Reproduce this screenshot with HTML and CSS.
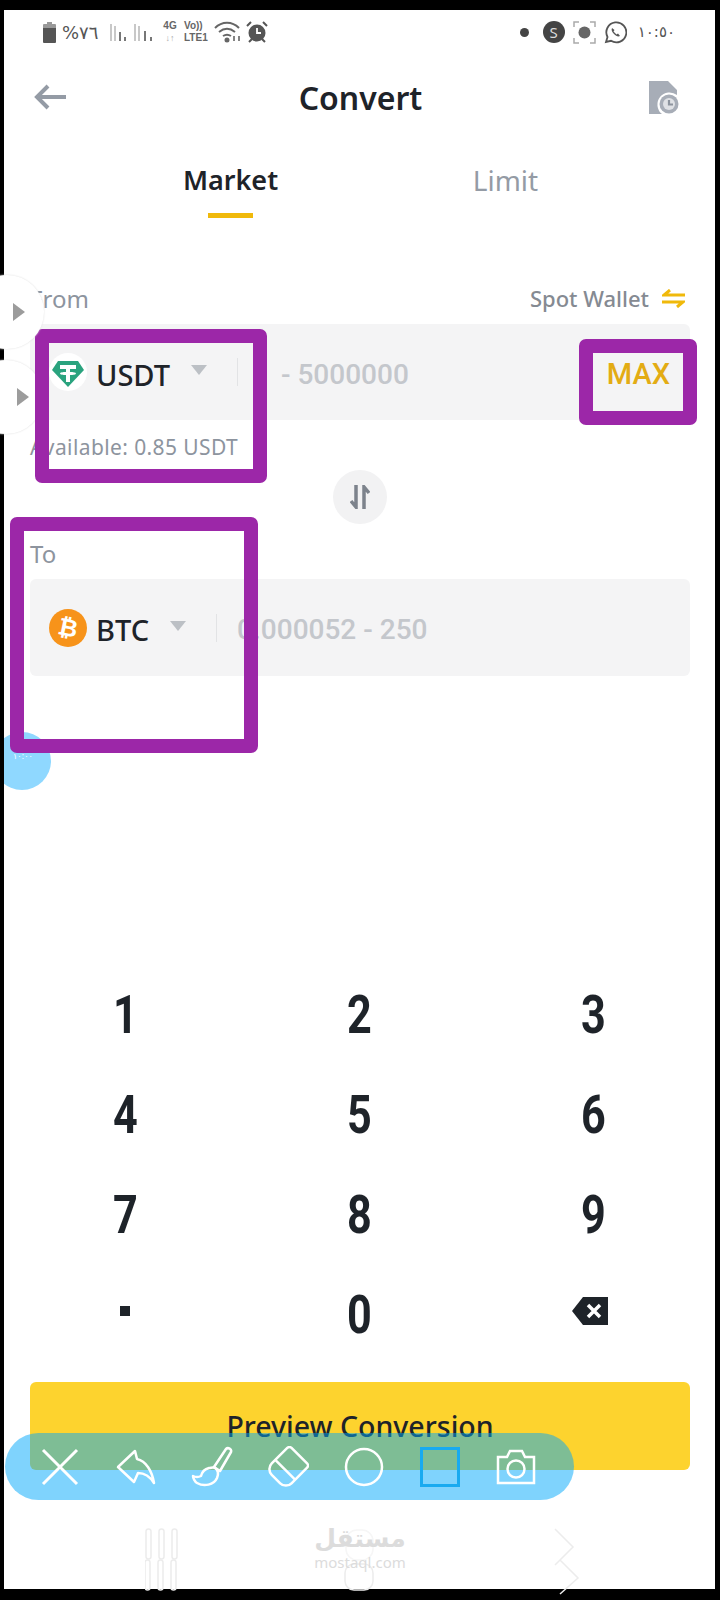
FILE: index.html
```html
<!DOCTYPE html>
<html lang="en">
<head>
    <meta charset="UTF-8">
    <meta name="viewport" content="width=device-width, initial-scale=1.0">
    <title>Convert</title>
    <link rel="stylesheet" href="styles.css">
</head>
<body>
    <div class="screen">
        <div class="statusbar">
            <div class="status-group">
                <svg class="st-battery" width="13" height="21" viewBox="0 0 13 21"><path d="M4 0h5v2h3a1 1 0 0 1 1 1v3H0V3a1 1 0 0 1 1-1h3z" fill="#999"/><path d="M0 6h13v14a1 1 0 0 1-1 1H1a1 1 0 0 1-1-1z" fill="#555"/></svg>
                <span class="st-percent">%٧٦</span>
                <svg class="st-signal" width="17" height="19" viewBox="0 0 17 19"><path d="M1 1v17M5 3v15" stroke="#bbb" stroke-width="1.600"/><path d="M10 9v9M15 14v4" stroke="#777" stroke-width="2"/></svg>
                <svg class="st-signal2" width="19" height="19" viewBox="0 0 19 19"><path d="M1 1v17M5 3v15" stroke="#bbb" stroke-width="1.600"/><path d="M11 8v10M17 14v4" stroke="#777" stroke-width="2"/></svg>
                <span class="st-net">4G<small>↓↑</small></span>
                <span class="st-volte">Vo))<br>LTE1</span>
                <svg class="st-wifi" width="28" height="22" viewBox="0 0 28 22" fill="none" stroke="#666" stroke-width="2"><path d="M1 7c7-7 17-7 24 0M5 11c5-4 11-4 16 0M9 15c3-2 5-2 8 0"/><circle cx="13" cy="19" r="1.500" fill="#666"/><path d="M20 15v5M25 20v-5" stroke-width="1.600"/></svg>
                <svg class="st-alarm" width="22" height="22" viewBox="0 0 22 22"><circle cx="11" cy="12" r="8.500" fill="#555"/><path d="M11 7v5h4" stroke="#fff" stroke-width="1.800" fill="none"/><path d="M1 5l4-4M21 5l-4-4M3 21l3-3M19 21l-3-3" stroke="#555" stroke-width="2"/></svg>
            </div>
            <div class="status-group">
                <span class="st-dot"></span>
                <span class="st-skype">S</span>
                <svg class="st-focus" width="23" height="23" viewBox="0 0 23 23" fill="none" stroke="#aaa" stroke-width="1.500"><circle cx="11.500" cy="11.500" r="6" fill="#666" stroke="none"/><path d="M1 6V1h5M17 1h5v5M22 17v5h-5M6 22H1v-5"/></svg>
                <svg class="st-whatsapp" width="23" height="23" viewBox="0 0 23 23" fill="none" stroke="#555" stroke-width="1.800"><path d="M2 21l1.500-5A10 10 0 1 1 7 19.800z"/><path d="M8 7c-1 2 0 4 2 6s4 3 6 2l-2-2.500-1.500 1-3-3 1-1.500z" fill="#555" stroke="none"/></svg>
                <span class="st-time">١٠:٥٠</span>
            </div>
        </div>

        <div class="header">
            <svg width="34" height="26" viewBox="0 0 34 26" fill="none" stroke="#949ba5" stroke-width="4"><path d="M33 13H4M15 2L4 13l11 11"/></svg>
            <h1 class="title">Convert</h1>
            <svg width="32" height="35" viewBox="0 0 32 35"><path d="M1 1h19l9 9v5a12 12 0 0 0-15 19H1z" fill="#a7adb7"/><circle cx="21" cy="24" r="9.500" fill="#a7adb7"/><circle cx="21" cy="24" r="6" fill="#dfe1e5"/><path d="M21 20v4.500h4" stroke="#8d949e" stroke-width="2.200" fill="none"/></svg>
        </div>

        <div class="tabs">
            <div class="tab tab-active">Market<span class="tab-line"></span></div>
            <div class="tab">Limit</div>
        </div>

        <div class="row-label row-from">
            <span class="label">From</span>
            <span class="wallet">Spot Wallet
                <svg width="23" height="19" viewBox="0 0 23 19" fill="none" stroke="#f0b90b" stroke-width="3"><path d="M23 6H2l6-5M0 13h21l-6 5"/></svg>
            </span>
        </div>
        <div class="field">
            <svg class="coin" width="38" height="38" viewBox="0 0 38 38"><circle cx="19" cy="19" r="19" fill="#fff"/><path d="M9 8h20l6 9-16 17L3 17z" fill="#2aa37e"/><path d="M11 12h16v4h-6v3c3 0 6 .5 6 1.500S24 22 21 22v7h-4v-7c-3 0-6-.5-6-1.500S14 19 17 19v-3h-6z" fill="#fff"/></svg>
            <span class="coin-name">USDT</span>
            <span class="caret"></span>
            <span class="divider"></span>
            <span class="range range-usdt">- 5000000</span>
            <span class="max">MAX</span>
        </div>
        <div class="available">Available: 0.85 USDT</div>
        <div class="swap">
            <svg width="20" height="24" viewBox="0 0 20 24" fill="none" stroke="#7d838c" stroke-width="3.500"><path d="M6 0v22L1 16M14 24V2l5 6"/></svg>
        </div>
        <div class="row-label row-to">
            <span class="label">To</span>
        </div>
        <div class="field field-to">
            <svg class="coin" width="38" height="38" viewBox="0 0 38 38"><circle cx="19" cy="19" r="19" fill="#f7931a"/><text x="19" y="27" text-anchor="middle" class="btc-mark" transform="rotate(12 19 19)">₿</text></svg>
            <span class="coin-name">BTC</span>
            <span class="caret"></span>
            <span class="divider"></span>
            <span class="range range-btc">0.000052 - 250</span>
        </div>

        <div class="keypad">
            <div class="key"><span class="digit">1</span></div>
            <div class="key"><span class="digit">2</span></div>
            <div class="key"><span class="digit">3</span></div>
            <div class="key"><span class="digit">4</span></div>
            <div class="key"><span class="digit">5</span></div>
            <div class="key"><span class="digit">6</span></div>
            <div class="key"><span class="digit">7</span></div>
            <div class="key"><span class="digit">8</span></div>
            <div class="key"><span class="digit">9</span></div>
            <div class="key"><span class="key-dot"></span></div>
            <div class="key"><span class="digit">0</span></div>
            <div class="key">
                <svg class="key-back" width="36" height="28" viewBox="0 0 36 28"><path d="M11 0h25v28H11L0 14z" fill="#1e2329"/><path d="M16 8l12 12M28 8L16 20" stroke="#fff" stroke-width="3.500"/></svg>
            </div>
        </div>

        <button class="preview" type="button">Preview Conversion</button>

        <div class="blue-ball">١٠:٠٠</div>
    </div>

    <!-- things drawn over the app by the screenshot tool -->
    <svg class="nav-ghost" width="440" height="68" viewBox="0 0 440 68" fill="none" stroke="#ececec" stroke-width="1.500">
        <rect x="1" y="1" width="5" height="30" rx="2.500"/><rect x="14" y="1" width="5" height="30" rx="2.500"/><rect x="27" y="1" width="5" height="30" rx="2.500"/>
        <rect x="0" y="32" width="5" height="30" rx="2.500"/><rect x="13" y="32" width="5" height="30" rx="2.500"/><rect x="26" y="32" width="5" height="30" rx="2.500"/>
        <rect x="201" y="2" width="27" height="30" rx="11" stroke="#f6f6f6"/>
        <rect x="200" y="36" width="28" height="26" rx="9"/>
        <path d="M410 1l18 18-18 18M415 32l18 18-18 16"/>
    </svg>
    <div class="watermark">
        <span class="wm-ar">مستقل</span>
        <span class="wm-en">mostaql.com</span>
    </div>

    <div class="side-bubble bubble-two"><span class="bubble-arrow"></span></div>
    <div class="mark mark-usdt"></div>
    <div class="mark mark-max"></div>
    <div class="mark mark-to"></div>
    <div class="side-bubble bubble-one"><span class="bubble-arrow"></span></div>

    <div class="toolbar">
        <svg width="38" height="38" viewBox="0 0 38 38" fill="none" stroke="#fff" stroke-width="3"><path d="M2 2l34 34M36 2L2 36"/></svg>
        <svg width="40" height="36" viewBox="0 0 40 36" fill="none" stroke="#fff" stroke-width="2.500" stroke-linejoin="round"><path d="M2 18L19 2l2 8c9 2 15 12 17 24-5-8-10-10-16-10l-4 9z"/></svg>
        <svg width="42" height="42" viewBox="0 0 42 42" fill="none" stroke="#fff" stroke-width="2.500" stroke-linejoin="round"><path d="M23 21L35 3c2-2 6 0 5 3L29 25z"/><path d="M24 22c3 2 4 5 2 10-3 7-13 9-20 5-2-1-4-5-4-7 4 2 6 1 8 0 1-4 4-7 8-8 2 0 4-1 6 0z"/></svg>
        <svg width="42" height="42" viewBox="0 0 42 42" fill="none" stroke="#fff" stroke-width="2.500"><g transform="rotate(45 21 21)"><path d="M7 8a3 3 0 0 1 3-3h22a3 3 0 0 1 3 3v22a8 8 0 0 1-8 8H15a8 8 0 0 1-8-8z"/><path d="M7 25h28"/></g></svg>
        <svg width="40" height="40" viewBox="0 0 40 40" fill="none" stroke="#fff" stroke-width="2.500"><circle cx="20" cy="20" r="18"/></svg>
        <svg width="40" height="40" viewBox="0 0 40 40" fill="none" stroke="#19aaf0" stroke-width="3"><rect x="1.500" y="1.500" width="37" height="37"/></svg>
        <svg width="40" height="36" viewBox="0 0 40 36" fill="none" stroke="#fff" stroke-width="2.500"><path d="M2 8h9l3-6h12l3 6h9v26H2z"/><circle cx="20" cy="20" r="8.500"/></svg>
    </div>
</body>
</html>
```

FILE: styles.css
```css
:root {
    --ink: #1e2329;
    --muted: #8d949e;
    --field: #f4f4f5;
    --purple: #9c27a8;
    --gold: #e3ac14;
}
* {
    box-sizing: border-box;
}
body {
    margin: 0;
    width: 720px;
    height: 1600px;
    position: relative;
    overflow: hidden;
    background-color: #000;
    font-family: 'Noto Sans', 'Open Sans', sans-serif;
    color: var(--ink);
}
.screen {
    position: relative;
    margin: 10px 5px 0 4px;
    height: 1579px;
    background-color: #fff;
    overflow: hidden;
}

/* status bar */
.statusbar {
    height: 44px;
    padding: 0 40px 0 39px;
    display: flex;
    justify-content: space-between;
    align-items: center;
}
.status-group {
    display: flex;
    align-items: center;
}
.st-percent {
    font-family: 'DejaVu Sans', sans-serif;
    font-size: 18px;
    color: #555;
    margin-left: 6px;
    width: 44px;
}
.st-signal {
    margin-left: 4px;
}
.st-signal2 {
    margin-left: 7px;
}
.st-net {
    margin-left: 9px;
    width: 16px;
    font-family: 'Liberation Sans', sans-serif;
    font-size: 10px;
    font-weight: 700;
    line-height: 12px;
    color: #666;
    text-align: center;
}
.st-net small {
    display: block;
    font-size: 9px;
    color: #aaa;
}
.st-volte {
    margin-left: 6px;
    width: 27px;
    font-family: 'Liberation Sans', sans-serif;
    font-size: 10px;
    font-weight: 700;
    line-height: 12px;
    color: #666;
}
.st-wifi {
    margin-left: 3px;
}
.st-alarm {
    margin-left: 4px;
}
.st-dot {
    width: 9px;
    height: 9px;
    border-radius: 50%;
    background-color: #444;
}
.st-skype {
    margin-left: 14px;
    width: 22px;
    height: 22px;
    border-radius: 50%;
    background-color: #444;
    color: #ddd;
    font-size: 15px;
    line-height: 22px;
    text-align: center;
}
.st-focus {
    margin-left: 8px;
}
.st-whatsapp {
    margin-left: 8px;
}
.st-time {
    margin-left: 11px;
    font-family: 'DejaVu Sans', sans-serif;
    font-size: 15px;
    color: #555;
}

/* header and tabs */
.header {
    height: 86px;
    padding: 0 35px 0 29px;
    display: flex;
    justify-content: space-between;
    align-items: center;
}
.title {
    margin: 0 0 0 6px;
    font-size: 32px;
    font-weight: 600;
}
.tabs {
    height: 78px;
    padding-left: 89px;
    display: flex;
}
.tab {
    width: 275px;
    text-align: center;
    font-size: 28px;
    line-height: 38px;
    padding-top: 21px;
    color: #949ba5;
}
.tab-active {
    font-size: 27px;
    font-weight: 600;
    color: var(--ink);
}
.tab-line {
    display: block;
    width: 45px;
    height: 5px;
    margin: 14px auto 0;
    background-color: #f0b90b;
}

/* form */
.row-label {
    height: 32px;
    padding: 0 30px 0 26px;
    display: flex;
    justify-content: space-between;
    align-items: center;
}
.row-from {
    margin-top: 64px;
}
.row-to {
    margin-top: 14px;
    height: 30px;
}
.label {
    font-size: 24px;
    color: var(--muted);
}
.wallet {
    display: flex;
    align-items: center;
    gap: 13px;
    font-size: 22px;
    font-weight: 500;
    color: #858a92;
}
.field {
    margin: 10px 25px 0 26px;
    height: 96px;
    padding: 4px 20px 0 19px;
    display: flex;
    align-items: center;
    border-radius: 6px;
    background-color: var(--field);
}
.field-to {
    margin-top: 11px;
    height: 97px;
}
.coin {
    flex: none;
    margin-top: -4px;
}
.btc-mark {
    font-family: 'DejaVu Sans', sans-serif;
    font-size: 24px;
    font-weight: 700;
    fill: #fff;
}
.coin-name {
    margin-left: 9px;
    font-size: 29px;
    font-weight: 500;
}
.caret {
    margin: -8px 0 0 21px;
    width: 0;
    height: 0;
    border-left: 8px solid transparent;
    border-right: 8px solid transparent;
    border-top: 10px solid #bcc0c5;
}
.divider {
    margin: -4px 0 0 30px;
    width: 1px;
    height: 28px;
    background-color: #e2e3e5;
}
.range {
    font-family: Roboto, sans-serif;
    font-size: 28px;
    font-weight: 500;
    color: #c4c7cc;
}
.range-usdt {
    margin-left: 43px;
}
.range-btc {
    margin-left: 20px;
}
.max {
    margin-left: auto;
    font-family: Roboto, sans-serif;
    font-size: 29px;
    font-weight: 500;
    color: var(--gold);
}
.available {
    margin: 13px 0 0 26px;
    height: 28px;
    font-size: 21px;
    letter-spacing: 0.4px;
    line-height: 28px;
    color: var(--muted);
}
.swap {
    margin: 9px auto 0;
    width: 54px;
    height: 54px;
    border-radius: 50%;
    background-color: #f2f2f3;
    display: flex;
    align-items: center;
    justify-content: center;
}

/* number pad */
.keypad {
    margin-top: 288px;
    padding-left: 4px;
    display: grid;
    grid-template-columns: repeat(3, 234px);
    grid-auto-rows: 100px;
}
.key {
    display: flex;
    align-items: center;
    justify-content: center;
    font-family: Roboto, sans-serif;
    font-size: 54px;
    font-weight: 700;
}
.digit {
    display: inline-block;
    transform: scaleX(0.8);
}
.key-dot {
    width: 10px;
    height: 10px;
    margin-bottom: 6px;
    background-color: var(--ink);
}
.key-back {
    margin: 0 6px 6px 0;
}
.preview {
    display: block;
    width: 660px;
    height: 88px;
    margin: 18px 0 0 26px;
    border: none;
    border-radius: 6px;
    background-color: #fdd32e;
    font-family: 'Noto Sans', sans-serif;
    font-size: 28.500px;
    font-weight: 500;
    color: var(--ink);
}

/* screenshot markup on top of the app */
.mark {
    position: absolute;
    border: 14px solid var(--purple);
    border-radius: 7px;
}
.mark-usdt {
    left: 35px;
    top: 329px;
    width: 232px;
    height: 154px;
}
.mark-max {
    left: 579px;
    top: 339px;
    width: 118px;
    height: 86px;
}
.mark-to {
    left: 10px;
    top: 517px;
    width: 248px;
    height: 236px;
}
.side-bubble {
    position: absolute;
    width: 74px;
    height: 74px;
    border-radius: 50%;
    background-color: #fff;
    box-shadow: 0 0 2px #ddd;
}
.bubble-one {
    left: -30px;
    top: 275px;
}
.bubble-two {
    left: -31px;
    top: 360px;
}
.bubble-arrow {
    position: absolute;
    top: 28px;
    left: 43px;
    width: 0;
    height: 0;
    border-top: 9px solid transparent;
    border-bottom: 9px solid transparent;
    border-left: 12px solid #9c9c9c;
}
.bubble-two .bubble-arrow {
    left: 48px;
}
.blue-ball {
    position: absolute;
    left: -11px;
    top: 722px;
    width: 58px;
    height: 58px;
    padding-left: 20px;
    border-radius: 50%;
    background-color: #8fd8ff;
    color: #fff;
    font-family: 'DejaVu Sans', sans-serif;
    font-size: 8px;
    line-height: 50px;
}
.toolbar {
    position: absolute;
    left: 5px;
    top: 1433px;
    width: 569px;
    height: 67px;
    padding-left: 17px;
    border-radius: 34px;
    background-color: rgba(0, 167, 251, 0.5);
    display: grid;
    grid-template-columns: repeat(7, 76px);
    justify-items: center;
    align-items: center;
}
.nav-ghost {
    position: absolute;
    left: 145px;
    top: 1528px;
}
.watermark {
    position: absolute;
    left: 300px;
    top: 1523px;
    width: 120px;
    display: flex;
    flex-direction: column;
    align-items: center;
    color: #dcdcdc;
}
.wm-ar {
    font-family: 'DejaVu Sans', sans-serif;
    font-size: 25px;
    font-weight: 700;
    line-height: 32px;
}
.wm-en {
    font-size: 15px;
    line-height: 14px;
}
```
